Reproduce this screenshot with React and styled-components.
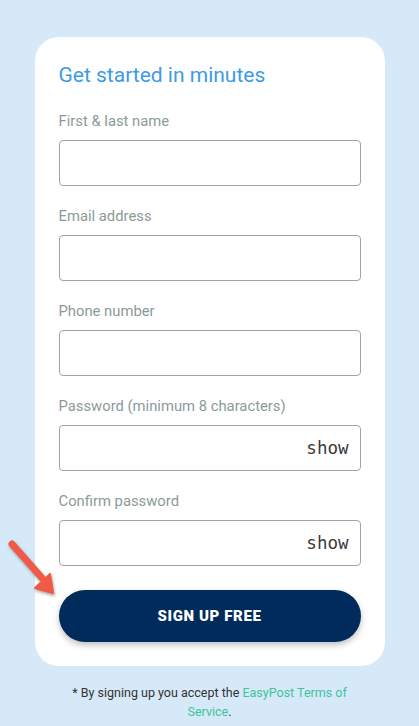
import React from "react";
import styled, { createGlobalStyle } from "styled-components";

const GlobalStyle = createGlobalStyle`
  html, body {
    margin: 0;
    padding: 0;
    background: #d6e9f8;
  }
  body {
    font-family: Roboto, "Liberation Sans", sans-serif;
  }
`;

const Page = styled.div`
  position: relative;
  width: 419px;
  min-height: 726px;
  padding-top: 37px;
  box-sizing: border-box;
  display: flex;
  flex-direction: column;
  align-items: center;
`;

const Card = styled.form`
  width: 350px;
  box-sizing: border-box;
  background: #fff;
  border-radius: 24px;
  padding: 26px 24px 24px;
  display: flex;
  flex-direction: column;
`;

const Title = styled.h1`
  margin: 0 0 23px;
  font-size: 21px;
  line-height: 25px;
  font-weight: 400;
  color: #3d9be6;
`;

const Field = styled.div`
  display: flex;
  flex-direction: column;
  margin-bottom: 20px;
  &:last-of-type {
    margin-bottom: 24px;
  }
`;

const Label = styled.label`
  font-size: 14.8px;
  line-height: 20px;
  color: #8c9a9a;
  margin-bottom: 9px;
`;

const InputWrap = styled.div`
  position: relative;
  height: 46px;
  border: 1px solid #a3a3a3;
  border-radius: 4px;
  box-sizing: border-box;
`;

const Input = styled.input`
  width: 100%;
  height: 100%;
  border: none;
  background: transparent;
  outline: none;
  padding: 0 12px;
  box-sizing: border-box;
  font-size: 16px;
`;

const Show = styled.span`
  position: absolute;
  right: 11px;
  top: 50%;
  transform: translateY(-50%);
  font-family: "DejaVu Sans Mono", "Liberation Mono", monospace;
  font-size: 17.5px;
  color: #3a3a3a;
`;

const Button = styled.button`
  height: 52px;
  border: none;
  border-radius: 26px;
  background: #002b5b;
  color: #fff;
  font-family: Roboto, "Liberation Sans", sans-serif;
  font-weight: 900;
  font-size: 15px;
  letter-spacing: 0.6px;
  box-shadow: 0 3px 6px rgba(0, 0, 0, 0.25);
`;

const Footer = styled.p`
  width: 290px;
  margin: 17px 0 0;
  text-align: center;
  font-size: 12.5px;
  line-height: 19px;
  color: #333;
`;

const Link = styled.a`
  color: #3cc59b;
  text-decoration: none;
`;

const Arrow = styled.svg`
  position: absolute;
  left: 6px;
  top: 538px;
  filter: drop-shadow(1px 2px 1.5px rgba(0, 0, 0, 0.35));
`;

const fields = [
  { label: "First & last name" },
  { label: "Email address" },
  { label: "Phone number" },
  { label: "Password (minimum 8 characters)", show: true },
  { label: "Confirm password", show: true },
];

export default function App() {
  return (
    <>
      <GlobalStyle />
      <Page>
        <Card onSubmit={(e) => e.preventDefault()}>
          <Title>Get started in minutes</Title>
          {fields.map((f) => (
            <Field key={f.label}>
              <Label>{f.label}</Label>
              <InputWrap>
                <Input type={f.show ? "password" : "text"} />
                {f.show && <Show>show</Show>}
              </InputWrap>
            </Field>
          ))}
          <Button type="submit">SIGN UP FREE</Button>
        </Card>
        <Footer>
          * By signing up you accept the <Link href="#">EasyPost Terms of Service</Link>.
        </Footer>
        <Arrow width="54" height="60" viewBox="0 0 54 60">
          <line x1="6" y1="6" x2="36" y2="40" stroke="#f05a46" strokeWidth="7" strokeLinecap="round" />
          <polygon points="47,55 29,50 44,36" fill="#f05a46" stroke="#f05a46" strokeWidth="2" strokeLinejoin="round" />
        </Arrow>
      </Page>
    </>
  );
}
